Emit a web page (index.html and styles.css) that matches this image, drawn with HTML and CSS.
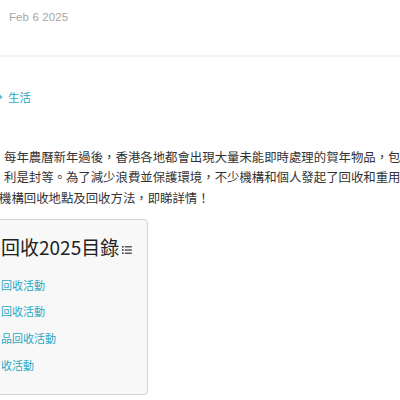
FILE: index.html
```html
<!DOCTYPE html>
<html lang="zh-Hant">
<head>
<meta charset="utf-8">
<title>回收2025</title>
<link rel="stylesheet" href="styles.css">
</head>
<body>
<div class="page">
  <div class="meta">
    <span class="clock"></span>
    <span class="date">Feb 6 2025</span>
  </div>
  <div class="divider"></div>
  <div class="cat">
    <span class="arr"></span>
    <a class="cat-link" href="#">生活</a>
  </div>
  <div class="intro">
    <div class="line ind">每年農曆新年過後，香港各地都會出現大量未能即時處理的賀年物品，包括揮春、</div>
    <div class="line ind">利是封等。為了減少浪費並保護環境，不少機構和個人發起了回收和重用行動，</div>
    <div class="line">機構回收地點及回收方法，即睇詳情！</div>
  </div>
  <div class="toc">
    <div class="toc-title">回收2025目錄<svg class="list-ic" width="10" height="8" viewBox="0 0 10 8"><rect x="0" y="0" width="1.6" height="1.6"/><rect x="2.8" y="0.2" width="7" height="1.2"/><rect x="0" y="3.2" width="1.6" height="1.6"/><rect x="2.8" y="3.4" width="7" height="1.2"/><rect x="0" y="6.4" width="1.6" height="1.6"/><rect x="2.8" y="6.6" width="7" height="1.2"/></svg></div>
    <ul class="toc-list">
      <li><a href="#">回收活動</a></li>
      <li><a href="#">回收活動</a></li>
      <li><a href="#">品回收活動</a></li>
      <li><a href="#">收活動</a></li>
    </ul>
  </div>
</div>
</body>
</html>
```
FILE: styles.css
```css
html, body {
  margin: 0;
  padding: 0;
  background: #ffffff;
  overflow: hidden;
}
.page {
  width: 400px;
  font-family: "Noto Sans CJK SC", "Noto Sans", sans-serif;
  color: #333333;
}
.meta {
  height: 55px;
  box-sizing: border-box;
  padding-top: 10px;
  display: flex;
  align-items: flex-start;
  margin-left: -9px;
}
.clock {
  width: 8px;
  height: 8px;
  border-radius: 50%;
  border: 1.5px solid #b5b5b5;
  box-sizing: border-box;
  margin-top: 3px;
  margin-right: 10px;
}
.date {
  font-family: "Liberation Sans", Arial, sans-serif;
  font-size: 11.5px;
  line-height: 14px;
  color: #a6a6a6;
  letter-spacing: 0.1px;
}
.divider {
  height: 2px;
  background: #f3f3f3;
}
.cat {
  margin-top: 30px;
  height: 20px;
  display: flex;
  align-items: center;
  margin-left: -5px;
}
.arr {
  width: 5px;
  height: 5px;
  border-top: 1.5px solid #29a9c6;
  border-right: 1.5px solid #29a9c6;
  transform: rotate(45deg);
  margin-right: 7px;
}
.cat-link {
  font-size: 11.5px;
  line-height: 20px;
  color: #29a9c6;
  text-decoration: none;
}
.intro {
  margin-top: 39.75px;
  margin-left: -1px;
  font-size: 12.4px;
  line-height: 20.5px;
  color: #333333;
}
.line {
  white-space: nowrap;
}
.ind {
  padding-left: 5px;
}
.toc {
  margin-top: 10.75px;
  margin-left: -20px;
  width: 168px;
  box-sizing: border-box;
  padding: 13px 0 16px 20px;
  background: #f8f8f8;
  border: 1px solid #d2d2d2;
  border-radius: 4px;
}
.toc-title {
  font-size: 19px;
  line-height: 28px;
  color: #222222;
  display: flex;
  align-items: center;
}
.list-ic {
  fill: #333333;
  margin-left: 3px;
  margin-top: 6px;
}
.toc-list {
  list-style: none;
  margin: 10.6px 0 0 0;
  padding: 0;
}
.toc-list li {
  font-size: 11px;
  line-height: 26.7px;
}
.toc-list a {
  color: #29a9c6;
  text-decoration: none;
}
```
